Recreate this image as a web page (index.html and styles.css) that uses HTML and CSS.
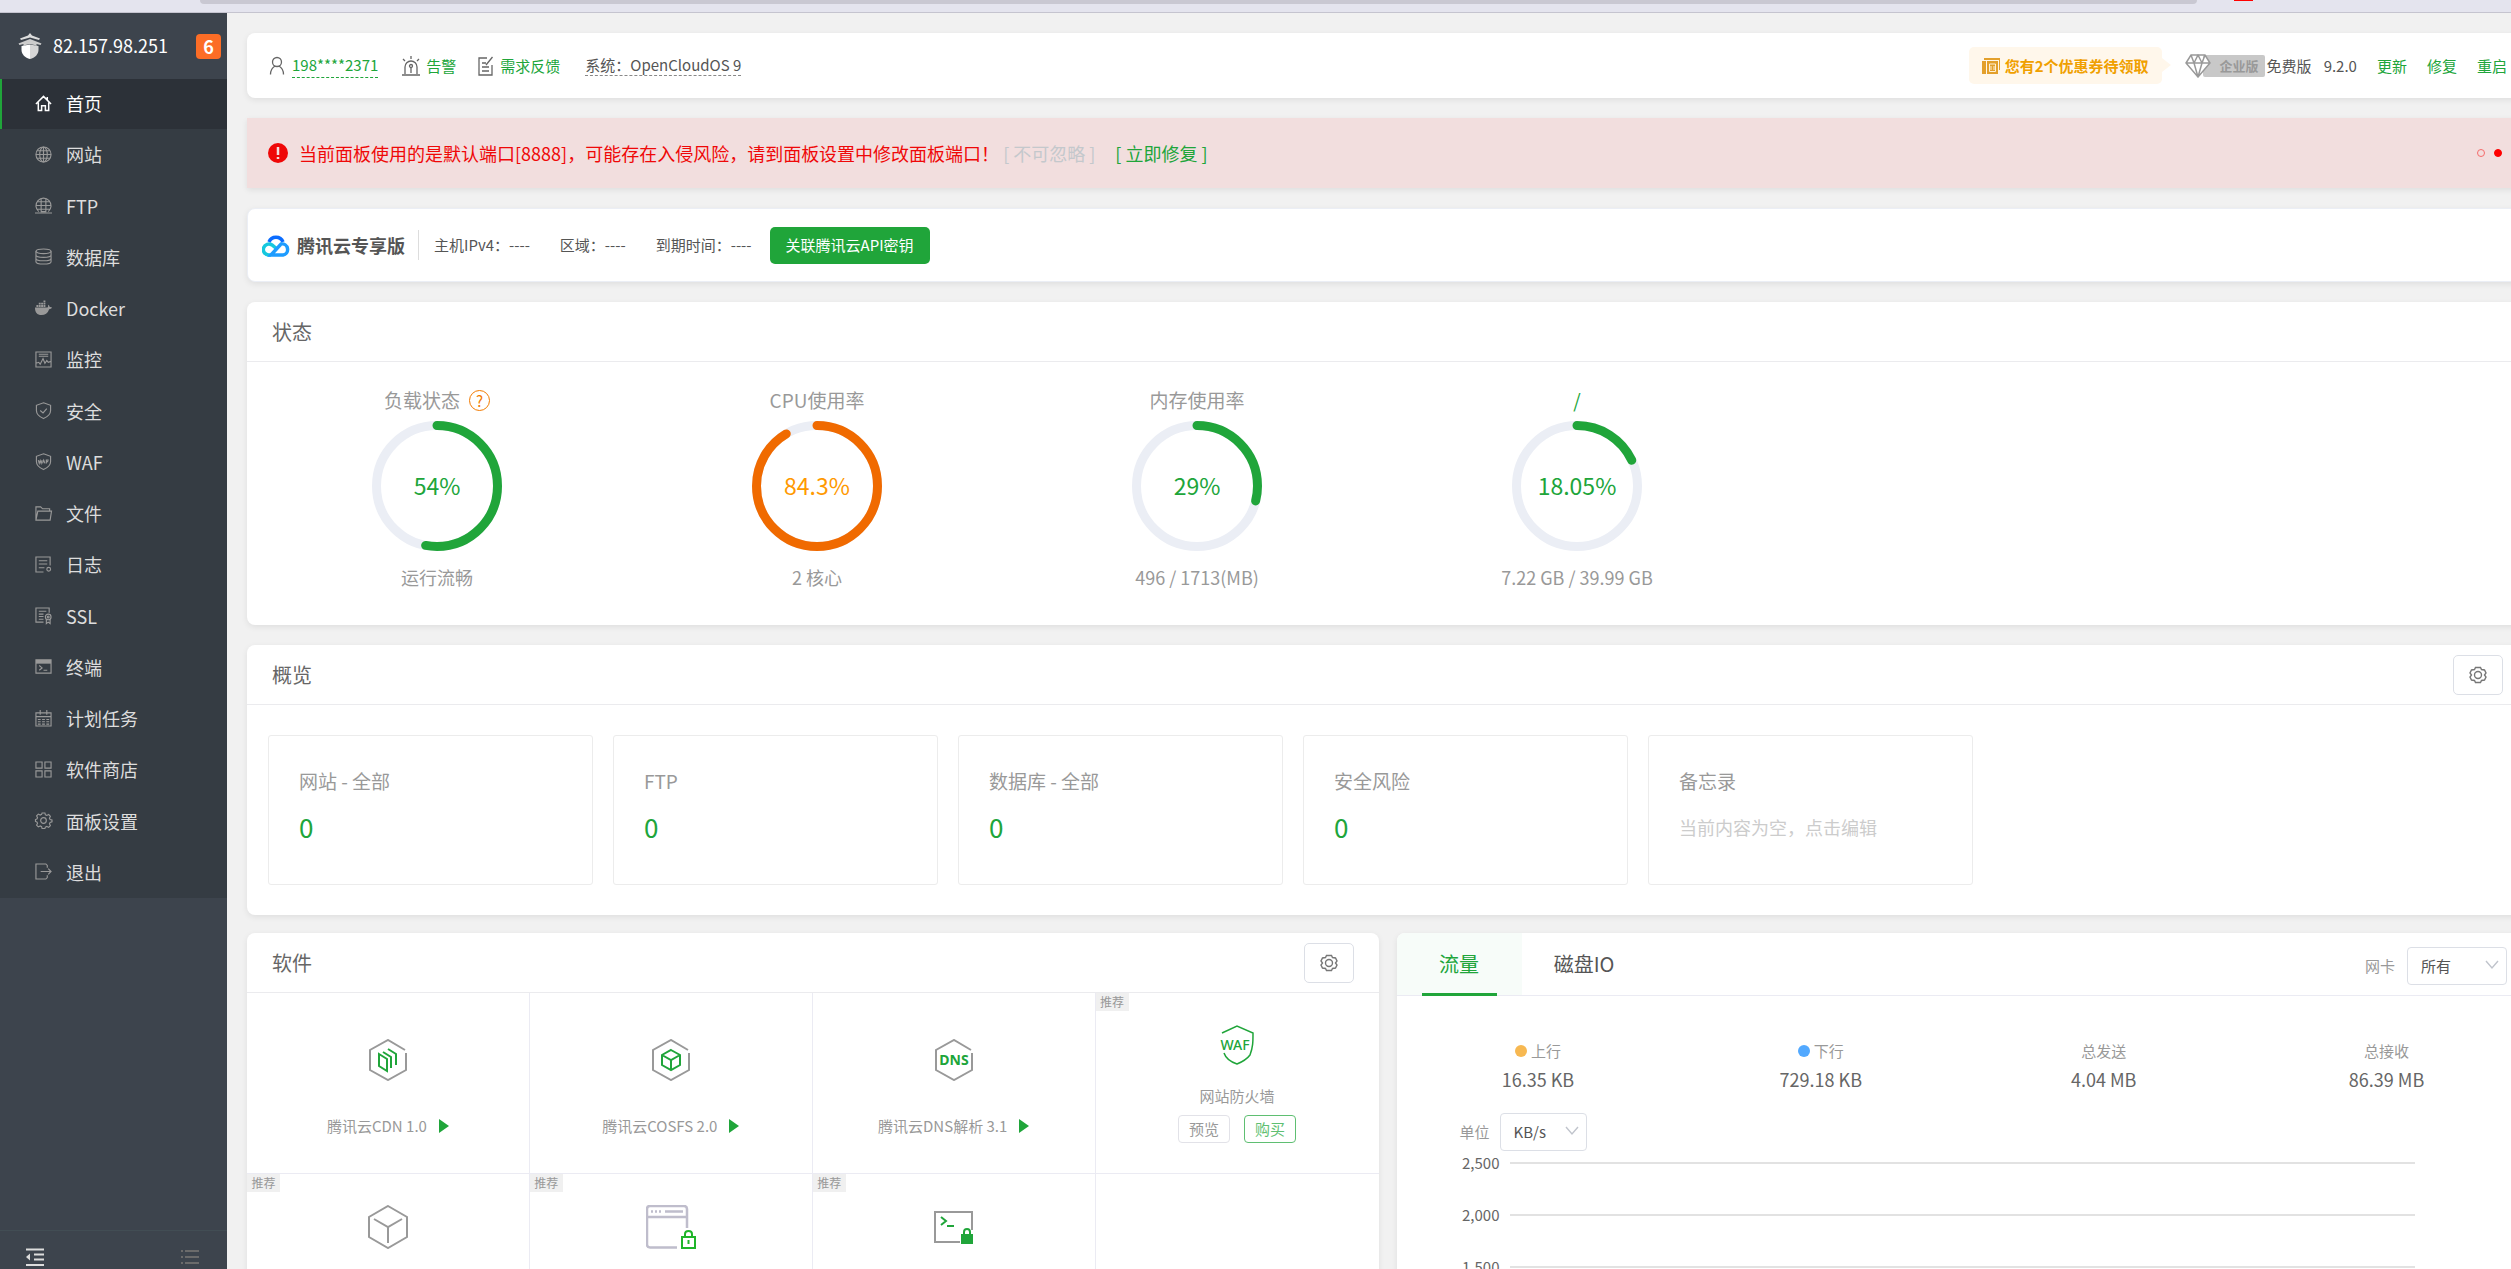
FILE: index.html
```html
<!DOCTYPE html>
<html lang="zh-CN">
<head>
<meta charset="utf-8">
<title>宝塔Linux面板</title>
<link rel="stylesheet" href="styles.css">
</head>
<body>
<div class="browser-strip"><span class="address-bar"></span><span class="strip-mark"></span></div>
<div class="shell">
  <aside class="sidebar">
    <header class="side-head">
      <svg class="side-logo" viewBox="0 0 24 26"><path d="M12 0l2 2.500 8 3-1 1.500-9-2.500L3 7 2 5.500l8-3z" fill="#ddd"/><path d="M.5 10.500L12 6l11.500 4.500-1 1.500-4-1v2l-2-1-4.500-1-4.500 1-2 1v-2l-4 1z" fill="#ccc"/><path d="M3.500 13L12 11.500V26c-5-1-8.500-5-8.500-9z" fill="#fff"/><path d="M20.500 13L12 11.500V26c5-1 8.500-5 8.500-9z" fill="#d6d6d6"/></svg>
      <span class="side-ip">82.157.98.251</span>
      <span class="side-badge">6</span>
    </header>
    <nav>
      <ul class="menu">
        <li><a class="active" href="#"><svg viewBox="0 0 18 18"><path d="M1 9.500L9 1.500l8 8M3.500 8v8.500h3.500v-5h4v5h3.500V8M13 2v3"/></svg>首页</a></li>
        <li><a href="#"><svg viewBox="0 0 18 18"><circle cx="9" cy="9" r="8"/><path d="M1 9h16M9 1v16M2.500 5h13M2.500 13h13"/><ellipse cx="9" cy="9" rx="4" ry="8"/></svg>网站</a></li>
        <li><a href="#"><svg viewBox="0 0 18 18"><path d="M4 15.500a8 8 0 1 1 10 0M1.500 9h15M2.500 5h13M2.500 13h13M6.500 15V2M11.500 15V2M0 17h18M6 15.500h6"/></svg>FTP</a></li>
        <li><a href="#"><svg viewBox="0 0 18 18"><ellipse cx="9" cy="3.500" rx="8" ry="2.500"/><path d="M1 3.500v11c0 3.300 16 3.300 16 0v-11M1 7.500c0 3.300 16 3.300 16 0M1 11c0 3.300 16 3.300 16 0"/></svg>数据库</a></li>
        <li><a href="#"><svg viewBox="0 0 18 18"><path class="solid" d="M0 8h13c1 0 1-2 .8-3 1.500.8 1.700 1.700 1.700 2.500 1-.3 2 0 2.500.5-.5 1.300-1.800 1.700-3 1.700C13.500 14 10.500 16 7 16c-5 0-7-3-7-8zM1.500 5.300h2v2h-2zM4 5.300h2v2H4zM6.500 5.300h2v2h-2zM9 5.300h2v2H9zM4 2.800h2v2H4zM6.500 2.800h2v2h-2zM9 2.800h2v2H9zM9 .5h2v2H9z"/></svg>Docker</a></li>
        <li><a href="#"><svg viewBox="0 0 18 18"><path d="M1 1h16v16H1zM4 3.500h10M4 5.500h10M1 13l3-1 1.500 2 3-6 2 5 2-3 1.500 2 3-1"/></svg>监控</a></li>
        <li><a href="#"><svg viewBox="0 0 18 18"><path d="M9 .8L16.500 3.500V9c0 4-3 6.500-7.500 8.500C4.500 15.500 1.500 13 1.500 9V3.500zM5.500 9L8.500 11.500l4-4.500"/></svg>安全</a></li>
        <li><a href="#"><svg viewBox="0 0 18 18"><path d="M9 .8L16.500 3.500V9c0 4-3 6.500-7.500 8.500C4.500 15.500 1.500 13 1.500 9V3.500zM3.500 7.500l1 3.500 1-3 1 3 1-3.500M8 11l1.200-3.500L10.500 11M12 11V7.500h2.500M12 9.200h2"/></svg>WAF</a></li>
        <li><a href="#"><svg viewBox="0 0 18 18"><path d="M1 16V2h5l2 2h7.500v2.500M1 16L3 6.500h14.500L16 16z"/></svg>文件</a></li>
        <li><a href="#"><svg viewBox="0 0 18 18"><path d="M9 17H1V1h15v9M4 5h9M4 8.500h9M4 12.500h6"/><circle cx="14.500" cy="14" r="2"/></svg>日志</a></li>
        <li><a href="#"><svg viewBox="0 0 18 18"><path d="M9 16H1V1h14v5M4 4.500h8M4 7.500h5M4 10h5M4 13h5M12 13v4.500l2-1.500 2 1.500V13"/><circle cx="14" cy="10.500" r="3"/><circle cx="14" cy="10.500" r="1"/></svg>SSL</a></li>
        <li><a href="#"><svg viewBox="0 0 18 18"><path d="M1 2h16v14H1zM4.500 8l3 2.500-3 2.500M9 13h4"/><path class="solid" d="M1 2h16v4H1z"/></svg>终端</a></li>
        <li><a href="#"><svg viewBox="0 0 18 18"><path d="M1 3h16v14H1zM1 7h16M5.500 0v5M12.500 0v5M3 10h3M7.500 10h3M12 10h3M3 12.500h3M7.500 12.500h3M12 12.500h3M3 15h3M7.500 15h3M12 15h3"/></svg>计划任务</a></li>
        <li><a href="#"><svg viewBox="0 0 18 18"><path d="M1 1h6.500v6.500H1zM10.500 1H17v6.500h-6.500zM1 10.500h6.500V17H1zM10.500 10.500H17V17h-6.500z"/></svg>软件商店</a></li>
        <li><a href="#"><svg viewBox="0 0 18 18"><path d="M7.500 1h3l.5 2 1.500.7 2-1 1.800 1.800-1 2 .7 1.500 2 .5v2l-2 .5-.7 1.500 1 2-1.800 1.800-2-1-1.500.7-.5 1.500h-3L7 15.500l-1.500-.7-2 1-1.800-1.800 1-2L2 10.500 0.500 10V8L2 7.500 2.700 6l-1-2 1.800-1.800 2 1L7 2.500z"/><circle cx="9" cy="9" r="3"/></svg>面板设置</a></li>
        <li><a href="#"><svg viewBox="0 0 18 18"><path d="M13 5V2.500L11.500 1H1v16h10.500L13 15.500V13M6 9h11M14 6l3 3-3 3"/></svg>退出</a></li>
      </ul>
    </nav>
    <footer class="side-foot">
      <svg viewBox="0 0 18 18" width="18" height="18"><path d="M0 1.500h18M8 6.500h10M8 11.500h10M0 17h18" stroke="#ddd" stroke-width="2"/><path d="M0 9l4-3.500v7z" fill="#ddd"/></svg>
      <svg viewBox="0 0 18 18" width="18" height="18"><path d="M0 3h2M4 3h14M0 9h2M4 9h14M0 15h2M4 15h14" stroke="#6b6b6b" stroke-width="2"/></svg>
    </footer>
  </aside>

  <main class="main">
    <section class="card topbar">
      <svg class="ico" viewBox="0 0 16 20" width="16" height="20"><circle cx="8" cy="6" r="4.500"/><path d="M1.500 18.500c0-4 2-7 4.500-8.500M14.500 18.500c0-4-2-7-4.500-8.500"/></svg>
      <a class="user" href="#">198****2371</a>
      <svg class="ico" viewBox="0 0 18 20" width="18" height="20"><path d="M3 18v-7a6 6 0 0 1 12 0v7M0 19h18M9 0v3M1 3l2 2M17 3l-2 2M9 12v5"/><circle cx="9" cy="10" r="1.500"/></svg>
      <a class="alarm" href="#">告警</a>
      <svg class="ico" viewBox="0 0 16 20" width="16" height="20"><path d="M9 2H1v17h13V9M4 7h4M4 11h7M4 15h7M14.500 1L8 9"/></svg>
      <a class="feedback" href="#">需求反馈</a>
      <span class="os">系统：OpenCloudOS 9</span>
      <div class="top-right">
        <a class="coupon" href="#"><svg viewBox="0 0 18 16" width="18" height="16"><path d="M0 3h4v13H0zM5 3h11v13H5zM2 0h16v12h-1V2H2z" fill="#e3a02c"/><path d="M7.500 6h6v7.500h-6zM9 8v4M12 8v4" fill="none" stroke="#fff1d6"/></svg>您有2个优惠券待领取</a>
        <span class="edition"><svg viewBox="0 0 26 24" width="26" height="24"><path d="M6 1h14l5 8-12 14L1 9zM1 9h24M6 1l3 8 4 14 4-14 3-8M9 9l4-8 4 8" fill="#fff" stroke="#999" stroke-width="1.500"/></svg><b>企业版</b></span>
        <span>免费版</span>
        <span class="version">9.2.0</span>
        <a href="#">更新</a>
        <a href="#">修复</a>
        <a href="#">重启</a>
      </div>
    </section>

    <section class="alert">
      <svg viewBox="0 0 20 20" width="20" height="20"><circle cx="10" cy="10" r="10" fill="#ef0808"/><path d="M10 4v8M10 14v2" stroke="#f2dede" stroke-width="2.500"/></svg>
      <p>当前面板使用的是默认端口[8888]，可能存在入侵风险，请到面板设置中修改面板端口！</p>
      <span class="ignore">[ 不可忽略 ]</span>
      <a href="#">[ 立即修复 ]</a>
      <div class="pager"><i></i><i class="on"></i></div>
    </section>

    <section class="card cloud">
      <svg viewBox="0 0 28 24" width="28" height="24" fill="none" stroke-width="3.500"><path d="M7 9a7.500 7.500 0 0 1 14 0" stroke="#0a6cff"/><path d="M9 22H7a5.500 5.500 0 1 1 3-10l5 4" stroke="#16c8de"/><path d="M9 22L19 11a5.500 5.500 0 1 1 2 11z" stroke="#1e9cff"/></svg>
      <strong>腾讯云专享版</strong>
      <div class="cloud-info"><span>主机IPv4：----</span><span>区域：----</span><span>到期时间：----</span></div>
      <button class="btn-primary" type="button">关联腾讯云API密钥</button>
    </section>

    <section class="card">
      <header class="card-head"><h2>状态</h2></header>
      <div class="gauges">
        <div class="gauge">
          <span class="g-title">负载状态 <i class="help">?</i></span>
          <div class="ring"><svg viewBox="0 0 130 130"><circle cx="65" cy="65" r="60.5"/><circle class="arc" cx="65" cy="65" r="60.5" pathLength="100" stroke-dasharray="53 100"/></svg><b>54%</b></div>
          <span class="g-note">运行流畅</span>
        </div>
        <div class="gauge warn">
          <span class="g-title">CPU使用率</span>
          <div class="ring"><svg viewBox="0 0 130 130"><circle cx="65" cy="65" r="60.5"/><circle class="arc" cx="65" cy="65" r="60.5" pathLength="100" stroke-dasharray="91.500 100"/></svg><b>84.3%</b></div>
          <span class="g-note">2 核心</span>
        </div>
        <div class="gauge">
          <span class="g-title">内存使用率</span>
          <div class="ring"><svg viewBox="0 0 130 130"><circle cx="65" cy="65" r="60.5"/><circle class="arc" cx="65" cy="65" r="60.5" pathLength="100" stroke-dasharray="29 100"/></svg><b>29%</b></div>
          <span class="g-note">496 / 1713(MB)</span>
        </div>
        <div class="gauge">
          <span class="g-title green">/</span>
          <div class="ring"><svg viewBox="0 0 130 130"><circle cx="65" cy="65" r="60.5"/><circle class="arc" cx="65" cy="65" r="60.5" pathLength="100" stroke-dasharray="18 100"/></svg><b>18.05%</b></div>
          <span class="g-note">7.22 GB / 39.99 GB</span>
        </div>
      </div>
    </section>

    <section class="card">
      <header class="card-head"><h2>概览</h2><button class="gear" type="button" aria-label="概览设置"><svg viewBox="0 0 18 18" width="18" height="18"><path d="M6.500 1.500h5l1 2 3 .5 1.500 3-1.500 2 1.500 2-1.500 3-3 .5-1 2h-5l-1-2-3-.5L1 11l1.500-2L1 7l1.500-3 3-.5z"/><circle cx="9" cy="9" r="3.500"/></svg></button></header>
      <div class="overview">
        <div class="box"><span>网站 - 全部</span><a href="#">0</a></div>
        <div class="box"><span>FTP</span><a href="#">0</a></div>
        <div class="box"><span>数据库 - 全部</span><a href="#">0</a></div>
        <div class="box"><span>安全风险</span><a href="#">0</a></div>
        <div class="box"><span>备忘录</span><p>当前内容为空，点击编辑</p></div>
      </div>
    </section>

    <div class="halves">
      <section class="card">
        <header class="card-head"><h2>软件</h2><button class="gear" type="button" aria-label="软件设置"><svg viewBox="0 0 18 18" width="18" height="18"><path d="M6.500 1.500h5l1 2 3 .5 1.500 3-1.500 2 1.500 2-1.500 3-3 .5-1 2h-5l-1-2-3-.5L1 11l1.500-2L1 7l1.500-3 3-.5z"/><circle cx="9" cy="9" r="3.500"/></svg></button></header>
        <div class="apps">
          <div class="app">
            <svg class="app-ico" viewBox="0 0 38 42" width="38" height="42"><path class="gray" d="M36 11L19 1 1 11v20l18 10 18-10V14"/><path class="grn" d="M10 15l8 5v12l-8-5zM14 13l8 5v11M19 10l8 5v11"/></svg>
            <span class="app-name">腾讯云CDN 1.0<i class="play"></i></span>
          </div>
          <div class="app">
            <svg class="app-ico" viewBox="0 0 38 42" width="38" height="42"><path class="gray" d="M36 11L19 1 1 11v20l18 10 18-10V14"/><path class="grn" d="M19 11l9 5v10l-9 5-9-5V16zM10 16l9 5 9-5M19 21v10"/></svg>
            <span class="app-name">腾讯云COSFS 2.0<i class="play"></i></span>
          </div>
          <div class="app">
            <svg class="app-ico" viewBox="0 0 38 42" width="38" height="42"><path class="gray" d="M36 11L19 1 1 11v20l18 10 18-10V14"/><text x="19" y="26" text-anchor="middle" font-size="14" font-weight="700">DNS</text></svg>
            <span class="app-name">腾讯云DNS解析 3.1<i class="play"></i></span>
          </div>
          <div class="app buy">
            <em class="tag">推荐</em>
            <svg class="app-ico" viewBox="0 0 36 40" width="36" height="40"><path class="thin" d="M3 8l15-7 16 7c0 9 0 14-3 22-3 4-8 7-13 9-6-2-11-5-13-11"/><text x="16" y="25" text-anchor="middle" font-size="14" font-weight="500">WAF</text></svg>
            <span class="app-name">网站防火墙</span>
            <div class="app-btns"><button type="button">预览</button><button class="green-btn" type="button">购买</button></div>
          </div>
          <div class="app">
            <em class="tag">推荐</em>
            <svg class="app-ico" viewBox="0 0 40 44" width="40" height="44"><path class="gray" d="M20 1l19 11v20L20 43 1 32V12zM6 14l14 8 14-8M20 22v16"/></svg>
          </div>
          <div class="app">
            <em class="tag">推荐</em>
            <svg class="app-ico" viewBox="0 0 50 44" width="50" height="44"><path d="M31 42.500H4q-3 0-3-3V4q0-3 3-3h34q3 0 3 3v19M1 12h40" fill="none" stroke="#bfbdcc" stroke-width="2.500"/><path d="M5 6.500h2M9 6.500h2M13 6.500h2M19 6.500h18" stroke="#bfbdcc" stroke-width="2.500"/><path d="M36 32h13v11H36zM39 32v-3c0-4 7-4 7 0v3M42.500 35v4" fill="none" stroke="#20b52a" stroke-width="2"/></svg>
          </div>
          <div class="app">
            <em class="tag">推荐</em>
            <svg class="app-ico" viewBox="0 0 40 44" width="40" height="44"><path class="gray" d="M26 37H1V7h37v18"/><path class="grn" d="M7 12l5 4-5 4M13 21h7"/><path d="M27 29h12v10H27z" fill="#20a53a"/><path class="grn" d="M30 29v-2c0-4 6-4 6 0v2"/></svg>
          </div>
          <div class="app"></div>
        </div>
      </section>

      <section class="card">
        <header class="tabs">
          <a class="tab on" href="#">流量</a>
          <a class="tab" href="#">磁盘IO</a>
          <label class="field nic">网卡
            <span class="pick wide"><select><option>所有</option></select><svg viewBox="0 0 14 10" width="14" height="10"><path d="M1 1l6 7 6-7"/></svg></span>
          </label>
        </header>
        <div class="stats">
          <div><span><i class="dot up"></i>上行</span><b>16.35 KB</b></div>
          <div><span><i class="dot down"></i>下行</span><b>729.18 KB</b></div>
          <div><span>总发送</span><b>4.04 MB</b></div>
          <div><span>总接收</span><b>86.39 MB</b></div>
        </div>
        <label class="field unit">单位
          <span class="pick"><select><option>KB/s</option></select><svg viewBox="0 0 14 10" width="14" height="10"><path d="M1 1l6 7 6-7"/></svg></span>
        </label>
        <div class="chart">
          <div><span>2,500</span><hr></div>
          <div><span>2,000</span><hr></div>
          <div><span>1,500</span><hr></div>
        </div>
      </section>
    </div>
  </main>
</div>
</body>
</html>
```
FILE: styles.css
```css
* { box-sizing: border-box; }
body {
  margin: 0;
  height: 100vh;
  overflow: hidden;
  display: flex;
  flex-direction: column;
  background: #f1f1f1;
  color: #666;
  font: 15px/24px "Noto Sans CJK SC", "Noto Sans", sans-serif;
}
a { color: #20a53a; text-decoration: none; }
p, h2, ul { margin: 0; padding: 0; font-weight: 400; }
i, em { font-style: normal; }
button, select { font: inherit; }
svg { flex: none; }

.browser-strip {
  flex: none;
  height: 13px;
  display: flex;
  align-items: flex-start;
  padding: 0 258px 0 200px;
  background: #e4e4ee;
  border-bottom: 1px solid #c5c4cf;
}
.address-bar { flex: 1; height: 4px; background: #c9c8d2; border-radius: 0 0 10px 10px; }
.strip-mark { width: 19px; height: 1px; margin-left: 37px; background: #f00; }

.shell { flex: 1; min-height: 0; display: flex; overflow: hidden; }

/* sidebar */
.sidebar { flex: none; width: 227px; display: flex; flex-direction: column; background: #3d444d; }
.side-head { height: 66px; flex: none; display: flex; align-items: center; padding: 0 6px 0 18px; color: #fff; font-size: 18px; }
.side-logo { width: 24px; height: 26px; }
.side-ip { flex: 1; margin-left: 11px; padding-bottom: 2px; }
.side-badge { width: 25px; height: 25px; border-radius: 4px; background: #fc6d26; font-weight: 700; line-height: 24px; text-align: center; }
.menu { height: 819px; display: flex; flex-direction: column; justify-content: space-between; list-style: none; background: #353c43; }
.menu a { display: flex; align-items: center; gap: 14px; height: 50px; padding: 0 0 2px 33px; border-left: 2px solid transparent; color: #ddd; font-size: 18px; }
.menu a.active { background: #2c3138; border-color: #20a53a; color: #fff; }
.menu svg { width: 17px; height: 17px; fill: none; stroke: #999; stroke-width: 1.2; overflow: visible; }
.menu .active svg { stroke: #fff; stroke-width: 1.6; }
.menu .solid { fill: #999; stroke: none; }
.side-foot { margin-top: auto; height: 39px; display: flex; justify-content: space-between; padding: 17px 28px 0 26px; border-top: 1px solid #424d54; }

.main { flex: 1; min-width: 0; margin-right: -17px; padding: 20px 0 0 20px; display: flex; flex-direction: column; gap: 20px; }
.card { flex: none; background: #fff; border-radius: 8px; box-shadow: 0 2px 6px rgba(0, 0, 0, .08); }

.topbar { height: 65px; display: flex; align-items: center; padding: 0 21px 0 22px; color: #555; }
.ico { fill: none; stroke: #666; stroke-width: 1.3; }
.user { margin: 0 24px 0 7px; border-bottom: 1px dashed #20a53a; }
.alarm { margin: 0 22px 0 6px; }
.feedback { margin: 0 25px 0 6px; }
.os { line-height: 20px; border-bottom: 1px dashed #888; }
.top-right { margin-left: auto; display: flex; align-items: center; gap: 20px; }
.coupon { position: relative; height: 37px; display: flex; align-items: center; gap: 5px; padding: 0 13px; margin-right: 3px; background: #fff7eb; border-radius: 5px; color: #f0a000; font-weight: 700; }
.coupon::after { content: ""; position: absolute; left: 100%; top: 11px; border: 7px solid transparent; border-left: 9px solid #fff7eb; border-right: 0; }
.edition { display: flex; align-items: center; margin-right: -18px; }
.edition svg { position: relative; }
.edition b { height: 22px; margin-left: -8px; padding: 0 6px 0 17px; background: #c8c8c8; border-radius: 2px; color: #999; font-size: 13px; line-height: 22px; }
.version { margin-left: -8px; }

.alert { flex: none; height: 70px; display: flex; align-items: center; padding: 0 26px 0 21px; background: #f2dede; color: #ef0808; font-size: 18px; box-shadow: 0 2px 6px rgba(0, 0, 0, .08); }
.alert p { margin-left: 11px; }
.ignore { margin: 0 20px 0 4px; color: #c4c8cc; }
.pager { margin-left: auto; display: flex; gap: 9px; }
.pager i { width: 8px; height: 8px; border: 1px solid #f56c6c; border-radius: 50%; }
.pager .on { background: #f00; border-color: #f00; }

.cloud { min-height: 74px; display: flex; align-items: center; padding: 0 14px; border: 1px solid #ebeef5; color: #555; }
.cloud strong { margin: 0 13px 0 7px; font-size: 18px; }
.cloud-info { height: 30px; display: flex; align-items: center; gap: 30px; padding-left: 15px; margin-right: 18px; border-left: 1px solid #ddd; }
.btn-primary { height: 37px; padding: 0 16px; border: 0; border-radius: 5px; background: #20a53a; color: #fff; }

.card-head { height: 60px; display: flex; align-items: center; justify-content: space-between; padding: 0 25px; border-bottom: 1px solid #ebebee; }
.card-head h2 { font-size: 20px; }
.gear { width: 50px; height: 40px; display: grid; place-items: center; padding: 0; border: 1px solid #dcdfe6; border-radius: 5px; background: #fff; }
.gear svg { fill: none; stroke: #777; stroke-width: 1.4; }

.gauges { display: grid; grid-template-columns: repeat(4, 380px); padding: 26px 0 36px; }
.gauge { display: flex; flex-direction: column; align-items: center; color: #999; font-size: 18px; }
.g-title { display: flex; align-items: center; gap: 9px; height: 24px; margin-bottom: 9px; font-size: 19px; }
.help { width: 21px; height: 21px; border: 1px solid #f27a00; border-radius: 50%; color: #f27a00; font-size: 15px; line-height: 19px; text-align: center; }
.green { color: #20a53a; }
.ring { display: grid; place-items: center; }
.ring > * { grid-area: 1 / 1; }
.ring svg { width: 130px; height: 130px; fill: none; stroke: #ebeef5; stroke-width: 9; }
.ring .arc { stroke: #20a53a; stroke-linecap: round; transform: rotate(-90deg); transform-origin: 50% 50%; }
.ring b { padding-bottom: 2px; color: #20a53a; font-size: 23px; font-weight: 400; }
.ring b, .g-note { white-space: nowrap; }
.warn .arc { stroke: #f06a00; }
.warn b { color: #ff9900; }
.g-note { margin-top: 14px; }

.overview { display: flex; gap: 20px; padding: 30px 21px; }
.box { width: 325px; height: 150px; display: flex; flex-direction: column; gap: 22px; padding: 33px 30px; border: 1px solid #ececec; border-radius: 3px; color: #999; font-size: 19px; }
.box a { font-size: 26px; }
.box p { color: #ccc; font-size: 18px; }

.halves { display: grid; grid-template-columns: 1fr 1fr; gap: 18px; margin-top: -2px; }
.apps { display: grid; grid-template-columns: repeat(4, 1fr); }
.app { position: relative; height: 181px; display: flex; flex-direction: column; align-items: center; padding-top: 46px; border-right: 1px solid #ebebf3; border-bottom: 1px solid #ebebf3; color: #999; }
.app:nth-child(4n) { border-right: 0; }
.app:nth-child(n + 5) { padding-top: 31px; }
.app-ico { font-family: "Noto Sans", sans-serif; }
.app-ico text { fill: #20a53a; }
.gray { fill: none; stroke: #999; stroke-width: 2; }
.grn { fill: none; stroke: #20a53a; stroke-width: 2; }
.thin { fill: none; stroke: #20a53a; stroke-width: 1.5; }
.app-name { display: flex; align-items: center; gap: 12px; margin-top: 33px; }
.play { border: 7px solid transparent; border-left: 10px solid #20a53a; border-right: 0; }
.buy { padding-top: 32px; }
.buy .app-name { margin-top: 19px; }
.app-btns { display: flex; gap: 14px; margin-top: 7px; }
.app-btns button { width: 52px; height: 28px; padding: 0; border: 1px solid #e2e2e8; border-radius: 4px; background: #fff; color: #999; }
.app-btns .green-btn { border-color: #5fbf72; color: #5fbf72; }
.tag { position: absolute; left: 0; top: 0; width: 33px; height: 18px; background: #f0f0f0; font-size: 12px; line-height: 18px; text-align: center; }

.tabs { height: 63px; display: flex; padding-right: 21px; border-bottom: 1px solid #ebebf3; }
.tab { width: 125px; display: flex; align-items: center; justify-content: center; color: #555; font-size: 20px; }
.tab.on { position: relative; border-radius: 8px 0 0 0; background: #f7fcf9; color: #20a53a; }
.tab.on::after { content: ""; position: absolute; left: 25px; right: 25px; bottom: -1px; height: 3px; background: #20a53a; }
.field { display: flex; align-items: center; gap: 12px; color: #999; }
.nic { margin-left: auto; padding-top: 4px; }
.pick { position: relative; width: 87px; height: 38px; }
.pick.wide { width: 100px; }
.pick select { width: 100%; height: 100%; padding: 0 13px; appearance: none; border: 1px solid #dcdfe6; border-radius: 4px; background: #fff; color: #555; }
.pick svg { position: absolute; right: 8px; top: 13px; fill: none; stroke: #c0c4cc; stroke-width: 1.4; pointer-events: none; }
.stats { display: grid; grid-template-columns: repeat(4, 1fr); padding: 43px 0 18px; text-align: center; }
.stats span { display: flex; align-items: center; justify-content: center; gap: 4px; color: #999; }
.stats b { font-size: 18px; font-weight: 400; line-height: 32px; }
.dot { width: 12px; height: 12px; border-radius: 50%; }
.up { background: #f7b851; }
.down { background: #52a9ff; }
.unit { padding-left: 63px; gap: 10px; }
.chart { display: flex; flex-direction: column; gap: 28px; padding-right: 113px; }
.chart div { display: flex; align-items: center; gap: 10px; }
.chart span { width: 103px; text-align: right; }
.chart hr { flex: 1; height: 2px; margin: 0; border: 0; background: #e2e2e2; }
```
